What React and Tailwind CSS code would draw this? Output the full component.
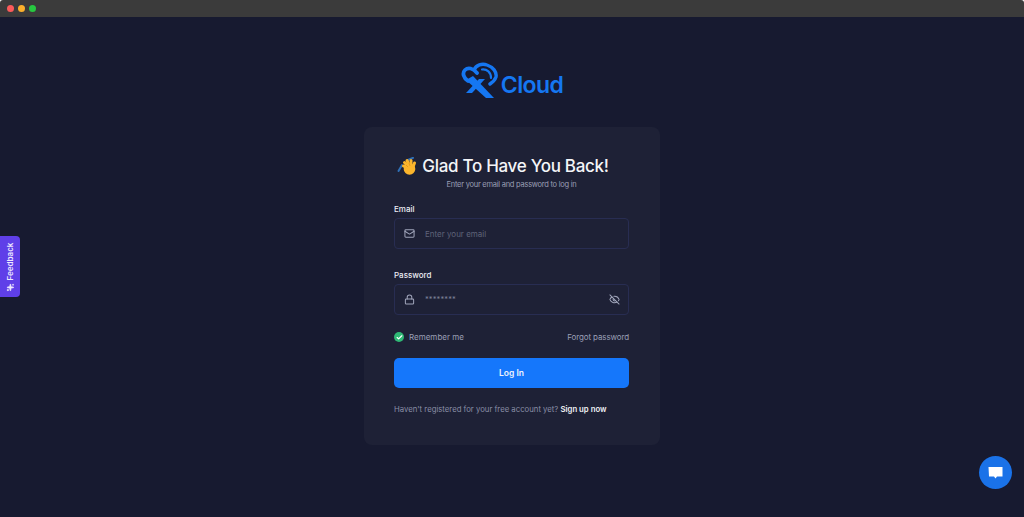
import { Mail, Lock, EyeOff, Check, Sparkles } from 'lucide-react'

function LogoMark() {
  return (
    <svg width="38" height="37" viewBox="0 0 38 37" fill="none" className="mr-[2px]">
      {/* cloud outline */}
      <path d="M7 19 C2.5 16 1 11 4 8 C7 5 12 6 16 11" stroke="#1577f2" strokeWidth="3.8" strokeLinecap="round" />
      <path d="M13 8 C15 3 21 1 26 3 C32 5 36 10 35 15 C34 18 32 20 29 22" stroke="#1577f2" strokeWidth="3.4" strokeLinecap="round" />
      <path d="M21 7.5 C26 7 30 10 30 16" stroke="#1577f2" strokeWidth="2.2" strokeLinecap="round" />
      {/* X */}
      <path d="M5 18 L12 14 L33 36 L25 36 Z" fill="#1577f2" />
      <path d="M18 17 L24 17 L11 31 L5 31 Z" fill="#1577f2" />
    </svg>
  )
}

function WaveHand() {
  return (
    <svg width="20" height="20" viewBox="0 0 20 20" className="mr-[5px]">
      <path d="M1.5 14 L5 8" stroke="#2f6fb5" strokeWidth="2" strokeLinecap="round" />
      <path d="M11 3 L16 0.8" stroke="#2f6fb5" strokeWidth="2" strokeLinecap="round" />
      <g stroke="#fbb52c" strokeWidth="3" strokeLinecap="round">
        <path d="M13 11 L6.5 9" />
        <path d="M13 11 L7.5 5.5" />
        <path d="M13 10 L10 3.5" />
        <path d="M14 10 L14 3.5" />
        <path d="M16 10 L17.5 6" />
      </g>
      <circle cx="12.5" cy="12" r="5.8" fill="#fbb52c" />
      <path d="M9 8 L11 10 M12 6 L13 9" stroke="#d98b14" strokeWidth="0.6" />
    </svg>
  )
}

export default function App() {
  return (
    <div className="relative h-[517px] w-[1024px] overflow-hidden bg-[#171a30] font-['Inter',sans-serif]">
      {/* window bar */}
      <div className="bg-white">
        <div className="flex h-[17px] items-center rounded-t-[3px] bg-[#3b3b3b] pl-[7px]">
          <span className="h-[7px] w-[7px] rounded-full bg-[#fb5a5a]" />
          <span className="ml-[4px] h-[7px] w-[7px] rounded-full bg-[#fbb02c]" />
          <span className="ml-[4px] h-[7px] w-[7px] rounded-full bg-[#27c840]" />
        </div>
      </div>

      <div className="flex flex-col items-center">
        <div className="mt-[44px] flex h-[38px] items-center">
          <LogoMark />
          <span className="mt-[10px] text-[23px] leading-[28px] font-semibold tracking-[-0.6px] text-[#1577f2]">Cloud</span>
        </div>

        <div className="mt-[28px] h-[318px] w-[296px] rounded-lg bg-[#1e2136] pt-[28px] pr-[31px] pl-[30px]">
          <div className="flex h-[24px] items-center justify-center pr-[17px]">
            <WaveHand />
            <h1 className="text-[17px] font-medium tracking-[-0.3px] whitespace-nowrap text-[#f4f5f8]">Glad To Have You Back!</h1>
          </div>
          <p className="text-center text-[7.5px] leading-[12px] tracking-[-0.25px] text-[#9a9fb5]">Enter your email and password to log in</p>

          <label className="mt-[12px] block text-[8px] leading-[12px] font-medium text-[#eceef4]">Email</label>
          <div className="mt-[3px] flex h-[31px] items-center rounded-[4px] border border-[#282d52] pl-[9px]">
            <Mail size={11} strokeWidth={2.2} className="text-[#a0a5ba]" />
            <span className="ml-[10px] text-[8px] text-[#5e6379]">Enter your email</span>
          </div>

          <label className="mt-[20px] block text-[8px] leading-[12px] font-medium text-[#eceef4]">Password</label>
          <div className="mt-[3px] flex h-[31px] items-center rounded-[4px] border border-[#282d52] pr-[8px] pl-[9px]">
            <Lock size={11} strokeWidth={2.2} className="text-[#a0a5ba]" />
            <span className="ml-[10px] text-[7.5px] tracking-[0.1px] text-[#7d8298]">********</span>
            <EyeOff size={11} strokeWidth={2.2} className="ml-auto text-[#a0a5ba]" />
          </div>

          <div className="mt-[15px] flex h-[14px] items-center justify-between">
            <div className="flex items-center gap-[5px]">
              <span className="flex h-[10px] w-[10px] items-center justify-center rounded-full bg-[#2fb875]">
                <Check size={7} strokeWidth={4} className="text-white" />
              </span>
              <span className="text-[8px] text-[#9a9fb5]">Remember me</span>
            </div>
            <span className="text-[8px] tracking-[-0.12px] text-[#9a9fb5]">Forgot password</span>
          </div>

          <button type="button" className="mt-[14px] h-[30px] w-full rounded-[5px] bg-[#1577fb] text-[8.5px] font-semibold text-[#eef3fb]">Log In</button>

          <p className="mt-[15px] text-[7.75px] leading-[12px] whitespace-nowrap text-[#8a8fa6]">
            Haven't registered for your free account yet? <span className="font-semibold text-[#f0f1f5]">Sign up now</span>
          </p>
        </div>
      </div>

      {/* feedback tab */}
      <div className="absolute top-[236px] left-0 flex h-[61px] w-[20px] items-center justify-center rounded-r-[4px] bg-[#5f3fe8]">
        <div className="flex -rotate-90 items-center gap-[3px] whitespace-nowrap text-[8px] font-semibold text-[#eeeaff]">
          <Sparkles size={8} fill="currentColor" className="rotate-90" />
          Feedback
        </div>
      </div>

      {/* chat bubble */}
      <div className="absolute top-[456px] left-[979px] flex h-[33px] w-[33px] items-center justify-center rounded-full bg-[#1a72e8]">
        <svg width="17" height="16" viewBox="0 0 17 16">
          <path d="M1.5 2 H15.5 V11.5 H10 L8.5 13.5 L7 11.5 H2 Z" fill="#fff" />
        </svg>
      </div>
    </div>
  )
}
